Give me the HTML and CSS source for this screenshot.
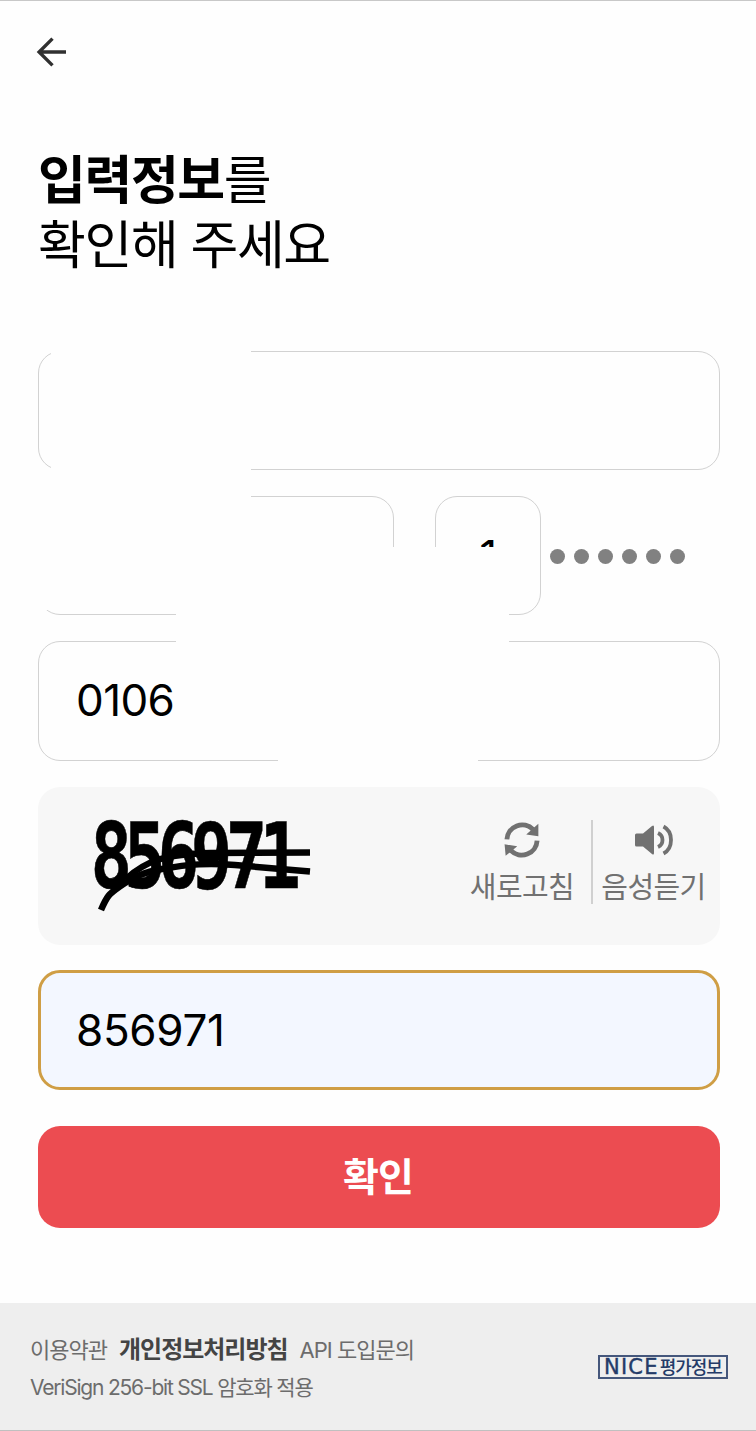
FILE: index.html
```html
<!DOCTYPE html>
<html lang="ko">
<head>
  <meta charset="UTF-8">
  <meta name="viewport" content="width=device-width, initial-scale=1.0">
  <title>입력정보 확인</title>
  <link rel="stylesheet" href="styles.css">
</head>
<body>
  <div class="page">
    <header class="header">
      <a href="#" class="back" aria-label="뒤로">
        <svg width="32" height="32" viewBox="0 0 32 32" fill="none" stroke="#303030" stroke-width="3.4">
          <path d="M31 16H4M17.500 2.600L4.100 16L17.500 29.400"/>
        </svg>
      </a>
    </header>

    <main class="content">
      <h1 class="title"><strong>입력정보</strong>를<br>확인해 주세요</h1>

      <form class="form">
        <div class="field"></div>

        <div class="row">
          <div class="field birth"></div>
          <div class="field gender">1</div>
          <div class="dots">
            <i></i><i></i><i></i><i></i><i></i><i></i>
          </div>
        </div>

        <div class="field phone">0106</div>

        <!-- Hidden personal info -->
        <div class="mask mask-name"></div>
        <div class="mask mask-birth"></div>
        <div class="mask mask-birth-end"></div>
        <div class="mask mask-gender"></div>
        <div class="mask mask-between"></div>
        <div class="mask mask-phone"></div>

        <div class="captcha">
          <svg class="captcha-image" width="240" height="120" viewBox="0 0 240 120">
            <g transform="translate(10.500 81) scale(0.76 1)">
              <text class="captcha-text" x="0 44 88 132 178 222" y="0">856971</text>
            </g>
            <g fill="none" stroke="#000">
              <path d="M21 103C27 89 29 87 39 80C54 70 64 65 82 62C110 57 128 56 155 58L230 64.500" stroke-width="6.500"/>
              <path d="M46 72C66 53 88 47 130 46L230 45.500" stroke-width="6.500"/>
            </g>
          </svg>
          <div class="captcha-actions">
            <button type="button" class="action">
              <svg width="38" height="38" viewBox="0 0 36 36">
                <path d="M3.700 17.500A14.500 14.500 0 0 1 28.500 8M32.300 18.500A14.500 14.500 0 0 1 7.500 28" fill="none" stroke="#717171" stroke-width="4.600"/>
                <path d="M33.500 2.500V14.500L22 12.800ZM1.500 22L13.500 24L2.500 33Z" fill="#717171"/>
              </svg>
              <span>새로고침</span>
            </button>
            <button type="button" class="action listen">
              <svg width="40" height="38" viewBox="0 0 40 36">
                <path d="M1 13Q1 11.500 2.500 11.500H9L18 4Q20 2.500 20 5V31Q20 33.500 18 32L9 24.500H2.500Q1 24.500 1 23Z" fill="#717171"/>
                <path d="M24 11Q28.500 13 28.500 18T24 25M29.500 4.500Q37 8.500 37 18T29.500 31.500" fill="none" stroke="#717171" stroke-width="3.800"/>
              </svg>
              <span>음성듣기</span>
            </button>
          </div>
        </div>

        <div class="field active">856971</div>

        <button type="button" class="submit">확인</button>
      </form>
    </main>

    <footer class="footer">
      <div class="footer-text">
        <p><a href="#">이용약관</a><a href="#" class="privacy">개인정보처리방침</a><a href="#">API 도입문의</a></p>
        <p class="ssl">VeriSign 256-bit SSL 암호화 적용</p>
      </div>
      <div class="nice"><b>NICE</b><span>평가정보</span></div>
    </footer>
  </div>
</body>
</html>
```
FILE: styles.css
```css
* {
  margin: 0;
  padding: 0;
  box-sizing: border-box;
}

body {
  font-family: Inter, "Noto Sans CJK KR", sans-serif;
  color: #000;
  background: #fefefe;
}

a {
  color: inherit;
  text-decoration: none;
}

button {
  border: 0;
  background: none;
  font-family: inherit;
}

.page {
  display: flex;
  flex-direction: column;
  height: 1431px;
  border-top: 1px solid #c8c8c8;
  border-bottom: 1px solid #c0c0c0;
}

.header {
  padding: 35px 35px 0;
}

.back,
.back svg {
  display: block;
  width: 32px;
  height: 32px;
}

.content {
  flex: 1;
  padding: 76px 36px 0 38px;
}

.title {
  font-family: "Noto Sans CJK KR", sans-serif;
  font-size: 52px;
  font-weight: 400;
  line-height: 65px;
  letter-spacing: -1.4px;
}

.title strong {
  font-weight: 700;
}

/* Form */
.form {
  position: relative;
  margin-top: 77px;
}

.field {
  display: flex;
  align-items: center;
  height: 119px;
  margin-bottom: 26px;
  padding-left: 37px;
  border: 1px solid #d2d2d2;
  border-radius: 22px;
  font-size: 44px;
  letter-spacing: -0.3px;
}

.row {
  display: flex;
}

.birth {
  width: 356px;
}

.gender {
  width: 106px;
  margin-left: 41px;
  justify-content: center;
  padding-left: 0;
}

.dots {
  display: flex;
  gap: 9px;
  margin: 53px 0 0 9px;
}

.dots i {
  width: 15px;
  height: 15px;
  border-radius: 50%;
  background: #818181;
}

.phone {
  height: 120px;
  padding-bottom: 2px;
  letter-spacing: -0.6px;
}

/* Masks over the personal info */
.mask {
  position: absolute;
  background: #fefefe;
}

.mask-name {
  left: 13px;
  top: -6px;
  width: 200px;
  height: 130px;
}

.mask-birth {
  left: -8px;
  top: 140px;
  width: 221px;
  height: 119px;
}

.mask-birth-end {
  left: 200px;
  top: 146px;
  width: 40px;
  height: 60px;
}

.mask-gender {
  left: 138px;
  top: 196px;
  width: 333px;
  height: 80px;
}

.mask-between {
  left: 138px;
  top: 270px;
  width: 333px;
  height: 80px;
}

.mask-phone {
  left: 240px;
  top: 340px;
  width: 200px;
  height: 75px;
}

/* Captcha */
.captcha {
  display: flex;
  justify-content: space-between;
  height: 158px;
  margin-bottom: 25px;
  padding: 20px 6px 0 42px;
  border-radius: 22px;
  background: #f7f7f7;
}

.captcha-text {
  font-family: "DejaVu Sans Mono", monospace;
  font-size: 91px;
  font-weight: 700;
  stroke: #000;
  stroke-width: 0.6;
}

.captcha-actions {
  display: flex;
  height: 84px;
  margin-top: 13px;
}

.action {
  display: flex;
  flex-direction: column;
  align-items: center;
  width: 123px;
  color: #717171;
  font-family: "Noto Sans CJK KR", sans-serif;
  font-size: 29px;
  line-height: 42px;
  letter-spacing: -0.6px;
  white-space: nowrap;
}

.action svg {
  flex-shrink: 0;
  margin: 1px 0 5px;
}

.action:first-child {
  width: 138px;
}

.listen {
  border-left: 2px solid #d0d0d0;
}

.active {
  height: 120px;
  margin-bottom: 36px;
  padding-bottom: 1px;
  padding-left: 35px;
  border: 3px solid #cf9e45;
  background: #f3f7ff;
}

.submit {
  display: block;
  width: 100%;
  height: 102px;
  padding-right: 2px;
  padding-bottom: 6px;
  border-radius: 22px;
  background: #ec4c51;
  color: #fff;
  font-family: "Noto Sans CJK KR", sans-serif;
  font-size: 39px;
  font-weight: 700;
  letter-spacing: -1px;
}

/* Footer */
.footer {
  display: flex;
  justify-content: space-between;
  height: 127px;
  padding: 28px 28px 0 30px;
  background: #eee;
  color: #6c6c6c;
  font-size: 22px;
  line-height: 37px;
  letter-spacing: -1px;
}

.privacy {
  margin: 0 12px;
  color: #444;
  font-size: 24px;
  font-weight: 700;
}

.ssl {
  font-size: 21px;
  letter-spacing: -1.2px;
}

.nice {
  display: flex;
  align-items: center;
  justify-content: center;
  width: 130px;
  height: 24px;
  margin-top: 24px;
  border: 2px solid #45577c;
  color: #243b68;
  white-space: nowrap;
}

.nice b {
  font-family: "DejaVu Sans", sans-serif;
  font-size: 21px;
  font-weight: 400;
  letter-spacing: 1.2px;
  -webkit-text-stroke: 0.4px #243b68;
}

.nice span {
  margin-left: 1px;
  font-size: 18px;
  font-weight: 500;
}
```
